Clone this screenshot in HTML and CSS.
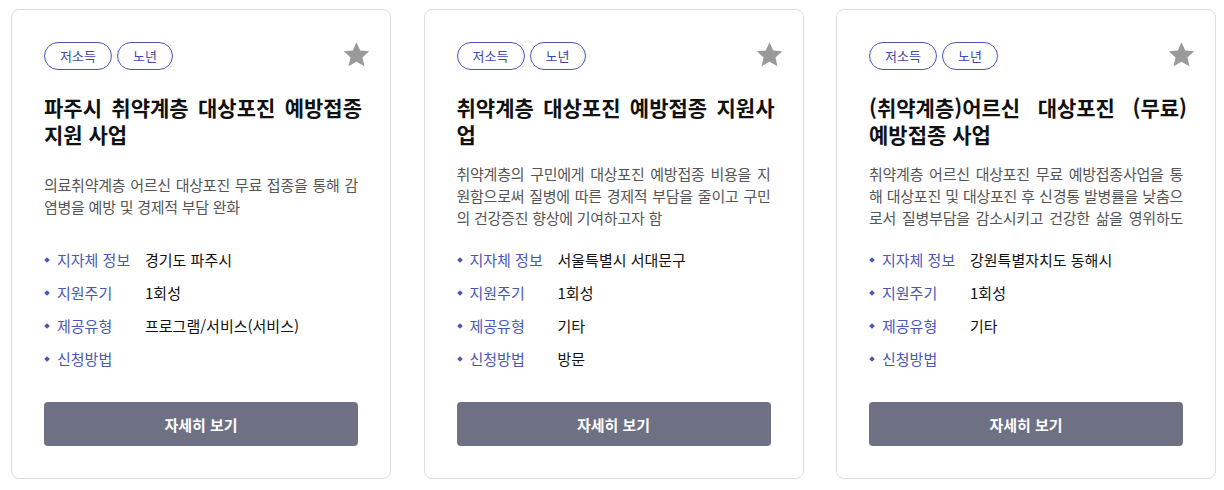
FILE: index.html
```html
<!DOCTYPE html>
<html lang="ko">
<head>
<meta charset="utf-8">
<link rel="stylesheet" href="styles.css">
</head>
<body>
<div class="cards">
  <div class="card">
    <div class="card-top">
      <div class="tags"><span class="tag">저소득</span><span class="tag">노년</span></div>
      <svg class="star" viewBox="0 0 24 24"><path d="M12 1.8l3.1 6.9 7.4.7-5.6 5 1.7 7.4L12 18l-6.6 3.8 1.7-7.4-5.6-5 7.4-.7z"/></svg>
    </div>
    <h2 class="title">파주시 취약계층 대상포진 예방접종 지원 사업</h2>
    <div class="desc"><p>의료취약계층 어르신 대상포진 무료 접종을 통해 감염병을 예방 및 경제적 부담 완화</p></div>
    <ul class="info">
      <li><span class="label">지자체 정보</span><span class="value">경기도 파주시</span></li>
      <li><span class="label">지원주기</span><span class="value">1회성</span></li>
      <li><span class="label">제공유형</span><span class="value">프로그램/서비스(서비스)</span></li>
      <li><span class="label">신청방법</span><span class="value"></span></li>
    </ul>
    <button class="btn">자세히 보기</button>
  </div>
  <div class="card">
    <div class="card-top">
      <div class="tags"><span class="tag">저소득</span><span class="tag">노년</span></div>
      <svg class="star" viewBox="0 0 24 24"><path d="M12 1.8l3.1 6.9 7.4.7-5.6 5 1.7 7.4L12 18l-6.6 3.8 1.7-7.4-5.6-5 7.4-.7z"/></svg>
    </div>
    <h2 class="title">취약계층 대상포진 예방접종 지원사업</h2>
    <div class="desc"><p>취약계층의 구민에게 대상포진 예방접종 비용을 지원함으로써 질병에 따른 경제적 부담을 줄이고 구민의 건강증진 향상에 기여하고자 함</p></div>
    <ul class="info">
      <li><span class="label">지자체 정보</span><span class="value">서울특별시 서대문구</span></li>
      <li><span class="label">지원주기</span><span class="value">1회성</span></li>
      <li><span class="label">제공유형</span><span class="value">기타</span></li>
      <li><span class="label">신청방법</span><span class="value">방문</span></li>
    </ul>
    <button class="btn">자세히 보기</button>
  </div>
  <div class="card">
    <div class="card-top">
      <div class="tags"><span class="tag">저소득</span><span class="tag">노년</span></div>
      <svg class="star" viewBox="0 0 24 24"><path d="M12 1.8l3.1 6.9 7.4.7-5.6 5 1.7 7.4L12 18l-6.6 3.8 1.7-7.4-5.6-5 7.4-.7z"/></svg>
    </div>
    <h2 class="title">(취약계층)어르신 대상포진 (무료) 예방접종 사업</h2>
    <div class="desc"><p>취약계층 어르신 대상포진 무료 예방접종사업을 통해 대상포진 및 대상포진 후 신경통 발병률을 낮춤으로서 질병부담을 감소시키고 건강한 삶을 영위하도록 함</p></div>
    <ul class="info">
      <li><span class="label">지자체 정보</span><span class="value">강원특별자치도 동해시</span></li>
      <li><span class="label">지원주기</span><span class="value">1회성</span></li>
      <li><span class="label">제공유형</span><span class="value">기타</span></li>
      <li><span class="label">신청방법</span><span class="value"></span></li>
    </ul>
    <button class="btn">자세히 보기</button>
  </div>
</div>
</body>
</html>
```
FILE: styles.css
```css
* { box-sizing: border-box; }
body {
  margin: 0;
  background: #fff;
  font-family: "Noto Sans CJK KR", "Noto Sans", sans-serif;
  color: #111;
}
.cards {
  display: grid;
  grid-template-columns: repeat(3, 380px);
  gap: 32.5px;
  padding: 9px 0 0 11px;
}
.card {
  height: 470px;
  border: 1px solid #dcdcdc;
  border-radius: 8px;
  padding: 32px 32px 0 32px;
  display: flex;
  flex-direction: column;
}
.card-top {
  display: flex;
  justify-content: space-between;
  align-items: flex-start;
  height: 30px;
}
.tags { display: flex; gap: 5px; }
.tag {
  height: 28px;
  border: 1px solid #4a57b8;
  border-radius: 14px;
  color: #3d4aa8;
  font-size: 13px;
  line-height: 26px;
  display: inline-flex;
  align-items: center;
  justify-content: center;
}
.tag:first-child { width: 68px; }
.tag:last-child { width: 56px; }
.star {
  width: 29px;
  height: 29px;
  fill: #9a9a9a;
  margin-top: -2px;
  margin-right: -13px;
}
.title {
  margin: 22px -4px 0 0;
  font-size: 21px;
  line-height: 27px;
  font-weight: 700;
  letter-spacing: 0;
  text-align: justify;
  word-break: break-all;
  height: 54px;
  color: #111;
}
.desc {
  margin-top: 15px;
  height: 66px;
  display: flex;
  align-items: center;
}
.desc p {
  margin: 0;
  font-size: 15px;
  line-height: 22px;
  letter-spacing: -0.25px;
  color: #555;
  text-align: justify;
  word-break: break-all;
  max-height: 66px;
  overflow: hidden;
}
.info {
  list-style: none;
  margin: 14px 0 0;
  padding: 0;
}
.info li {
  display: flex;
  align-items: center;
  height: 33px;
  font-size: 15px;
  position: relative;
  padding-left: 13px;
}
.info li::before {
  content: "";
  position: absolute;
  left: 1px;
  top: 50%;
  width: 4px;
  height: 4px;
  background: #4a57b8;
  transform: translateY(-50%) rotate(45deg);
}
.label {
  width: 88px;
  color: #4a57b8;
  flex: none;
}
.value { color: #111; }
.btn {
  margin-top: 27px;
  height: 44px;
  width: 100%;
  border: none;
  border-radius: 4px;
  background: #6e7084;
  color: #fff;
  font-family: inherit;
  font-size: 15px;
  font-weight: 700;
}
```
